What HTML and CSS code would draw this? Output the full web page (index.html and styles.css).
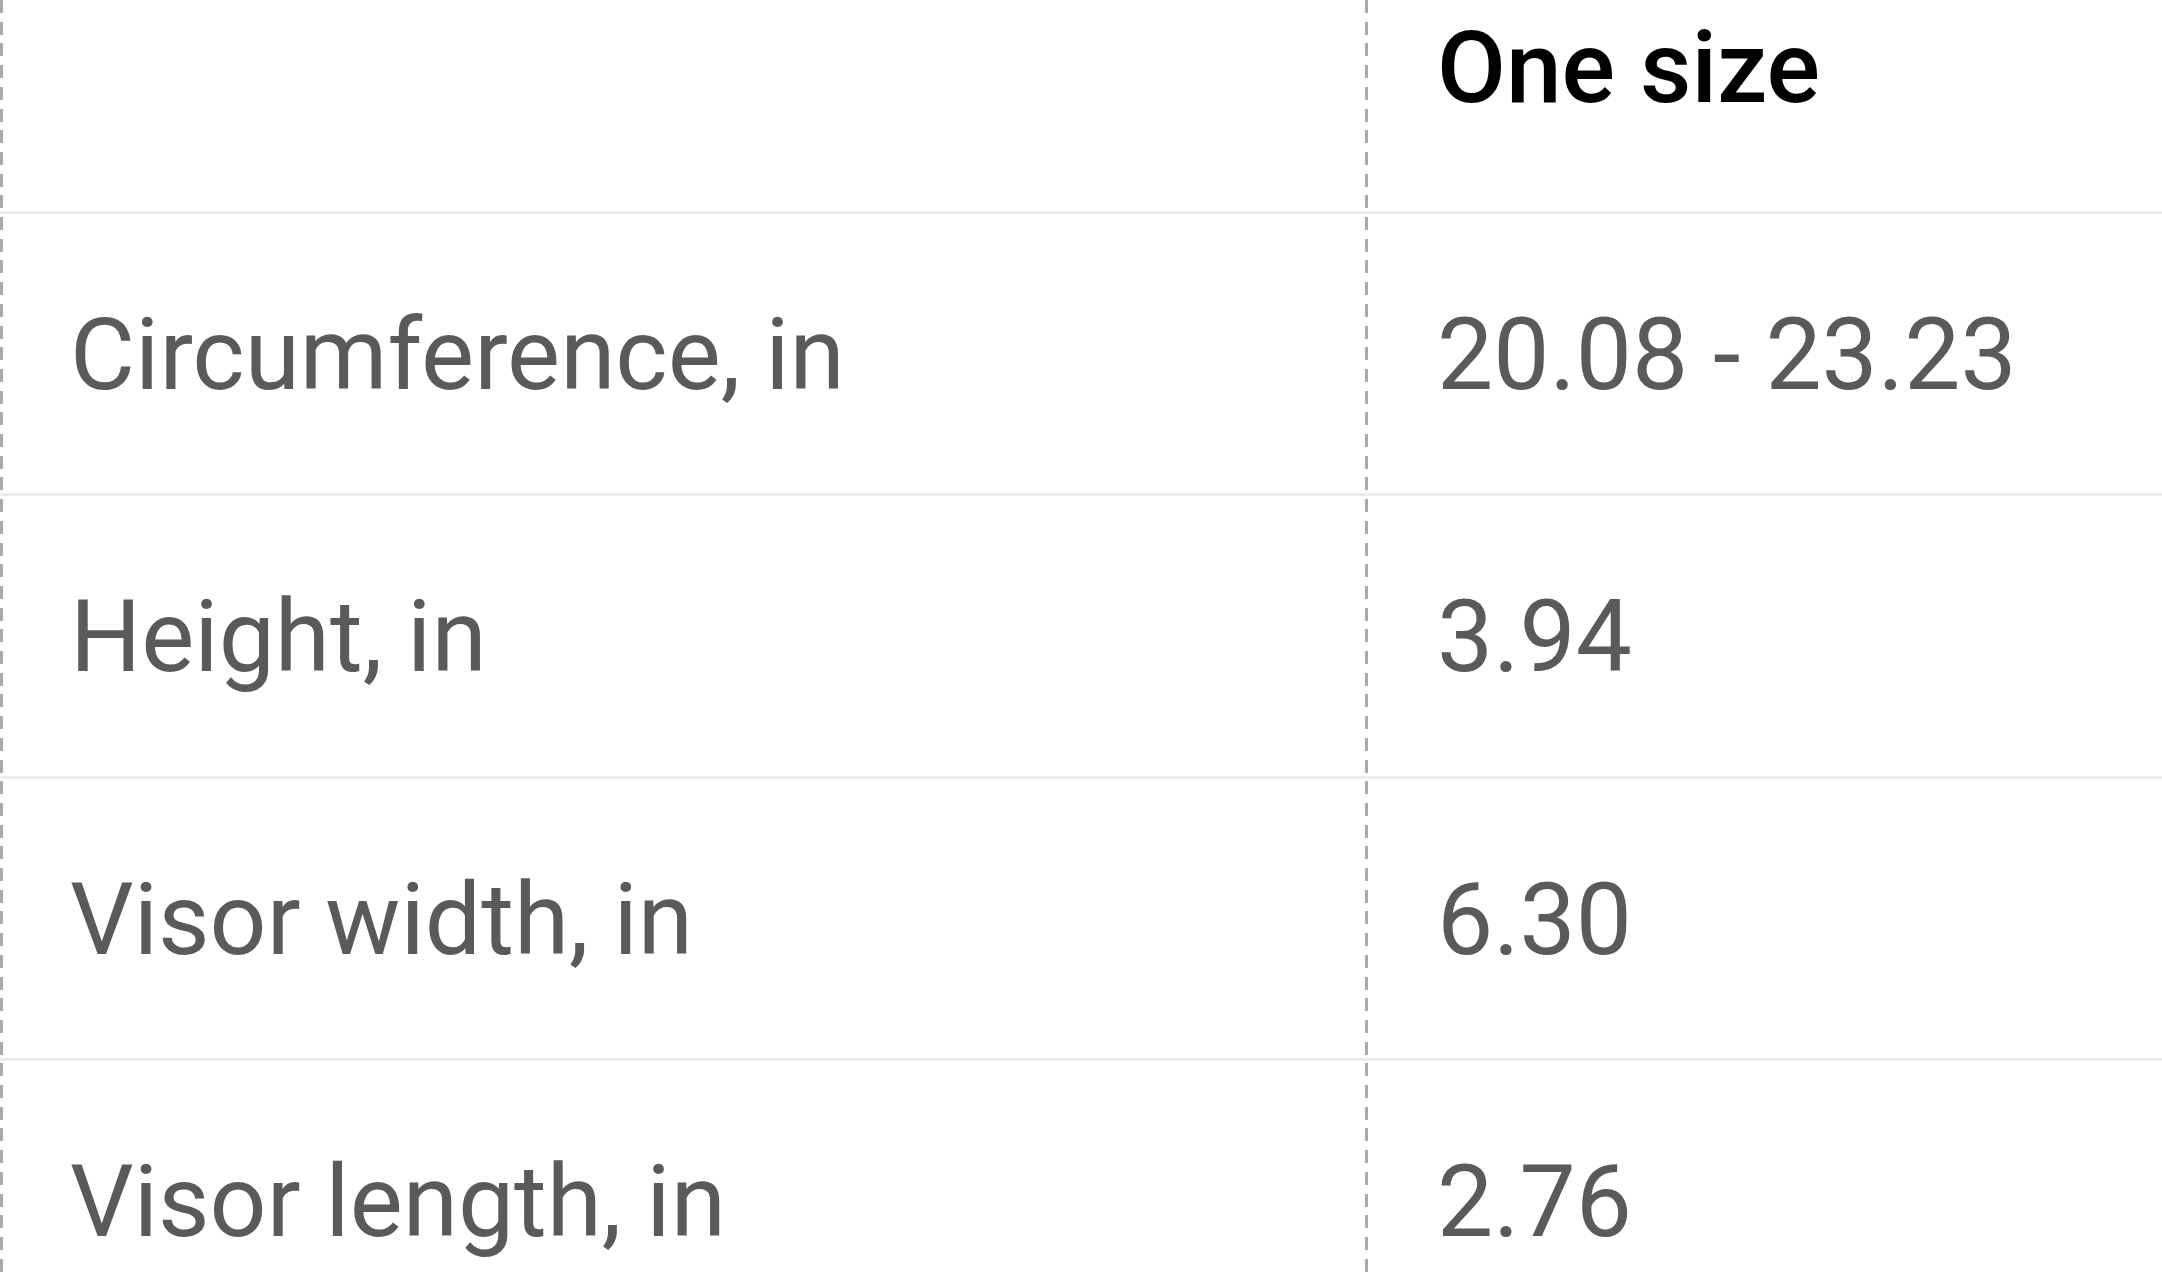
FILE: index.html
```html
<!DOCTYPE html>
<html lang="en">
<head>
<meta charset="utf-8">
<title>Size chart</title>
<link rel="stylesheet" href="styles.css">
</head>
<body>
<div class="size-table">
  <div class="row head">
    <div class="cell label"></div>
    <div class="cell value">One size</div>
  </div>
  <div class="row">
    <div class="cell label">Circumference, in</div>
    <div class="cell value">20.08 - 23.23</div>
  </div>
  <div class="row">
    <div class="cell label">Height, in</div>
    <div class="cell value">3.94</div>
  </div>
  <div class="row">
    <div class="cell label">Visor width, in</div>
    <div class="cell value">6.30</div>
  </div>
  <div class="row">
    <div class="cell label">Visor length, in</div>
    <div class="cell value">2.76</div>
  </div>
</div>
</body>
</html>
```
FILE: styles.css
```css
html, body {
  margin: 0;
  padding: 0;
  background: #ffffff;
  overflow: hidden;
}

.size-table {
  width: 2162px;
  font-family: Roboto, "Noto Sans", sans-serif;
  font-size: 100px;
  line-height: 100px;
  color: #5a5a5a;
  background-image:
    repeating-linear-gradient(to bottom, #aaaaaa 0 13px, transparent 13px 21.7px),
    repeating-linear-gradient(to bottom, #aaaaaa 0 13px, transparent 13px 21.7px);
  background-size: 3px 100%, 3px 100%;
  background-position: 0 0, 1365px 0;
  background-repeat: no-repeat;
}

.row {
  display: grid;
  grid-template-columns: 1365px 1fr;
  box-sizing: border-box;
  height: 282.4px;
  border-top: 3px solid #ececec;
}

.row.head {
  height: 211px;
  border-top: none;
}

.cell {
  padding-top: 91px;
  white-space: nowrap;
}

.head .cell {
  padding-top: 18px;
  color: #000000;
  font-weight: 500;
}

.label {
  padding-left: 70px;
}

.value {
  padding-left: 72px;
}
```
